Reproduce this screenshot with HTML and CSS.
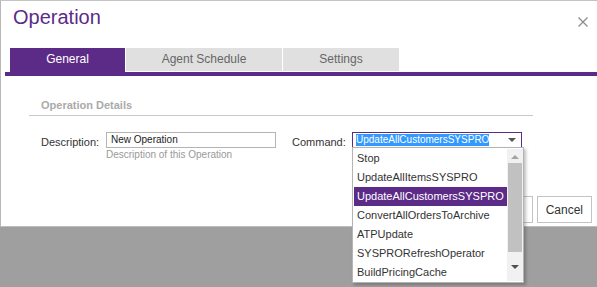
FILE: index.html
```html
<!DOCTYPE html>
<html lang="en">

<head>
  <meta charset="UTF-8">
  <title>Operation</title>
  <link rel="stylesheet" href="styles.css">
</head>

<body>
  <div class="dialog">
    <div class="dialog-header">
      <span class="dialog-title">Operation</span>
      <span class="close">
        <svg width="10" height="10" viewBox="0 0 10 10">
          <path d="M0.5 0.5 L9.5 9.5 M9.5 0.5 L0.5 9.5" stroke="#8a8a8a" stroke-width="1.2" fill="none" />
        </svg>
      </span>
    </div>

    <div class="tabs">
      <div class="tab active">General</div>
      <div class="tab tab-wide">Agent Schedule</div>
      <div class="tab">Settings</div>
    </div>

    <div class="section">
      <div class="section-title">Operation Details</div>
      <div class="form-row">
        <label class="field-label" for="description">Description:</label>
        <div class="field">
          <div class="text-input" id="description">New Operation</div>
          <div class="hint">Description of this Operation</div>
        </div>
        <label class="field-label command-label">Command:</label>
        <div class="field select-wrap">
          <div class="select">
            <span class="selected-text">UpdateAllCustomersSYSPRO</span>
            <span class="caret"></span>
          </div>
          <div class="dropdown">
            <ul class="options">
              <li>Stop</li>
              <li>UpdateAllItemsSYSPRO</li>
              <li class="current">UpdateAllCustomersSYSPRO</li>
              <li>ConvertAllOrdersToArchive</li>
              <li>ATPUpdate</li>
              <li>SYSPRORefreshOperator</li>
              <li>BuildPricingCache</li>
            </ul>
            <div class="scrollbar">
              <span class="arrow-up"></span>
              <span class="thumb"></span>
              <span class="arrow-down"></span>
            </div>
          </div>
        </div>
      </div>
    </div>

    <div class="dialog-footer">
      <button class="btn">Save</button>
      <button class="btn">Cancel</button>
    </div>
  </div>
</body>

</html>
```

FILE: styles.css
```css
html,
body {
  margin: 0;
  height: 100%;
  overflow: hidden;
  background: #9f9f9f;
  font-family: "Liberation Sans", Arial, sans-serif;
}

.dialog {
  background: #fff;
  border-top: 1px solid #c4c4c4;
  border-left: 1px solid #b8b8b8;
  border-bottom: 1px solid #bdbdbd;
}

.dialog-header {
  display: flex;
  justify-content: space-between;
  align-items: flex-start;
  height: 42px;
  padding: 5px 9px 0 12px;
}

.dialog-title {
  font-size: 20px;
  line-height: 23px;
  color: #5c2b88;
}

.close {
  display: block;
  width: 10px;
  height: 10px;
  margin-top: 11px;
}

.close svg {
  display: block;
}

.tabs {
  display: flex;
  gap: 1px;
  margin-left: 4px;
  padding-left: 5px;
  border-bottom: 4px solid #5c2b88;
}

.tab {
  box-sizing: border-box;
  width: 116px;
  height: 24px;
  line-height: 23px;
  font-size: 12px;
  text-align: center;
  color: #666;
  background: #e0e0e0;
  border-bottom: 1px solid #fff;
}

.tab.active {
  width: 115px;
  color: #fff;
  background: #5c2b88;
  border-bottom-color: #5c2b88;
}

.tab-wide {
  width: 156px;
}

.section {
  width: 504px;
  margin: 23px 0 0 28px;
}

.section-title {
  font-size: 11px;
  font-weight: bold;
  line-height: 13px;
  color: #aaa;
  padding: 0 0 3px 12px;
  border-bottom: 1px solid #c8c8c8;
}

.form-row {
  display: flex;
  align-items: flex-start;
  margin-top: 16px;
  padding-left: 12px;
}

.field-label {
  width: 65px;
  padding-top: 2px;
  font-size: 11px;
  line-height: 16px;
  color: #333;
}

.command-label {
  width: 60px;
  margin-left: 16px;
}

.field {
  width: 170px;
}

.text-input {
  box-sizing: border-box;
  height: 16px;
  padding-left: 4px;
  border: 1px solid #b4b4b4;
  font-size: 10px;
  line-height: 14px;
  color: #222;
}

.hint {
  margin-top: 1px;
  font-size: 10px;
  line-height: 12px;
  color: #999;
}

.select-wrap {
  position: relative;
}

.select {
  box-sizing: border-box;
  display: flex;
  align-items: center;
  justify-content: space-between;
  height: 16px;
  padding: 0 5px 0 3px;
  border: 1px solid #5c2b88;
  font-size: 10px;
}

.selected-text {
  line-height: 12px;
  color: #fff;
  background: #3399ff;
}

.caret {
  width: 0;
  height: 0;
  border-left: 4px solid transparent;
  border-right: 4px solid transparent;
  border-top: 4px solid #555;
}

.dropdown {
  position: absolute;
  top: 15px;
  left: 0;
  box-sizing: border-box;
  display: flex;
  width: 172px;
  height: 136px;
  padding: 1px 0 1px 1px;
  background: #fff;
  border: 1px solid #b4b4b4;
  box-shadow: 2px 2px 3px rgba(0, 0, 0, 0.25);
}

.options {
  flex: 1;
  margin: 0;
  padding: 0;
  list-style: none;
}

.options li {
  height: 19px;
  padding-left: 3px;
  font-size: 11px;
  line-height: 19px;
  color: #333;
}

.options li.current {
  color: #fff;
  background: #5c2b88;
}

.scrollbar {
  display: flex;
  flex-direction: column;
  align-items: center;
  width: 16px;
  background: #f1f1f1;
}

.arrow-up,
.arrow-down {
  display: block;
  width: 0;
  height: 0;
  border-left: 4px solid transparent;
  border-right: 4px solid transparent;
}

.arrow-up {
  margin: 6px 0 4px;
  border-bottom: 4px solid #a3a3a3;
}

.arrow-down {
  margin-top: 13px;
  border-top: 4px solid #505050;
}

.thumb {
  display: block;
  width: 14px;
  height: 89px;
  background: #c1c1c1;
}

.dialog-footer {
  display: flex;
  justify-content: flex-end;
  gap: 4px;
  margin-top: 35px;
  padding: 0 5px 3px 0;
}

.btn {
  box-sizing: border-box;
  height: 27px;
  padding: 0 8px;
  font-family: inherit;
  font-size: 12px;
  color: #333;
  background: #fff;
  border: 1px solid #c4c4c4;
}
```
